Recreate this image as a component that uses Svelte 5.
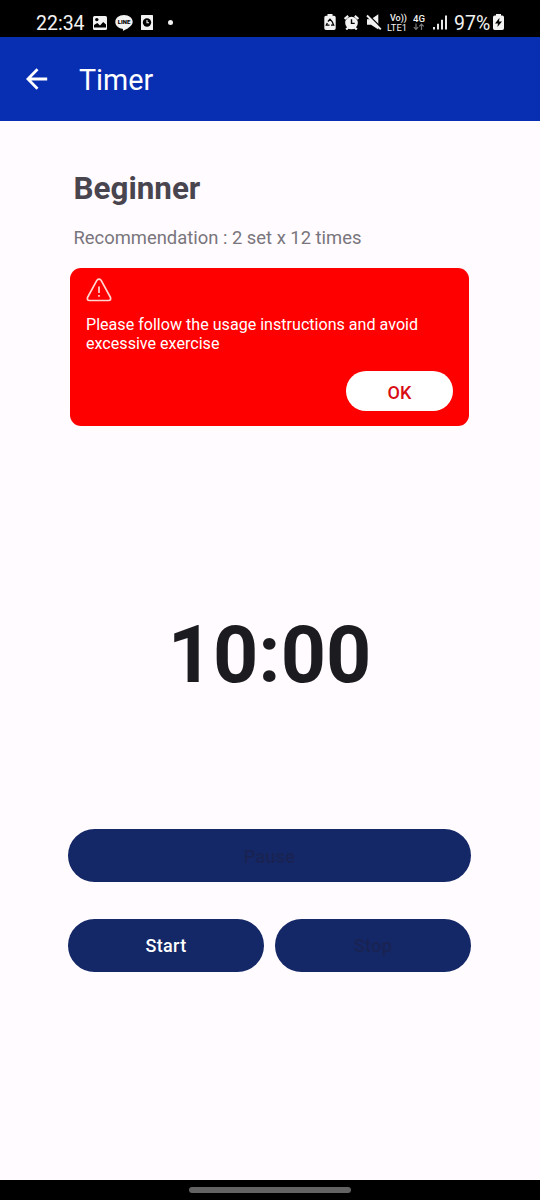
<script>
  let duration = $state(600);
  let noticeOpen = $state(true);
  const clock = $derived(
    `${String(Math.floor(duration / 60)).padStart(2, '0')}:${String(duration % 60).padStart(2, '0')}`
  );
</script>

<div class="screen">
  <div class="status">
    <span class="time">22:34</span>
    <svg class="gallery" width="14" height="14" viewBox="0 0 14 14">
      <rect width="14" height="14" rx="1.500" fill="#f2f2f2" />
      <path d="M1 11.500V9L4.300 7l2.700 2.500L10.200 6l2.800 2.500v3z" fill="#000" />
      <circle cx="3.800" cy="3.600" r="1.700" fill="#000" />
    </svg>
    <svg class="line" width="18" height="16" viewBox="0 0 18 16">
      <path d="M9 0C4 0 .3 3 .3 7c0 3.500 3 6.200 7 6.800.9.1.8.8.6 2.100 3-1.300 9.800-4.600 9.800-8.900C17.700 3 14 0 9 0z" fill="#f2f2f2" />
      <text x="9" y="9.300" text-anchor="middle" font-size="6" font-weight="900" textLength="12.500" lengthAdjust="spacingAndGlyphs">LINE</text>
    </svg>
    <svg class="clockapp" width="12" height="15" viewBox="0 0 12 15">
      <rect width="12" height="15" rx=".6" fill="#f2f2f2" />
      <circle cx="6" cy="7.500" r="4.200" fill="#000" />
      <path d="M6 5v2.800h2" fill="none" stroke="#f2f2f2" stroke-width="1.100" />
    </svg>
    <span class="dot"></span>
    <span class="spacer"></span>
    <svg class="recycle" width="12" height="16" viewBox="0 0 12 16">
      <path d="M3.500 0h5v1.800H10A1.700 1.700 0 0 1 11.700 3.500v10.800A1.700 1.700 0 0 1 10 16H2A1.700 1.700 0 0 1 .3 14.300V3.500A1.700 1.700 0 0 1 2 1.800h1.500z" fill="#f2f2f2" />
      <path d="M3.900 7.500 6 5.200l2.100 2.300 1.600 3.700H7M5.500 11.200H2.300l1-2.200" fill="none" stroke="#000" stroke-width="1.300" />
    </svg>
    <svg class="alarm" width="15" height="15" viewBox="0 0 15 15">
      <path d="M.6 4 4.200.9M14.400 4 10.800.9M2.200 14.500l2.300-2.200M12.800 14.500l-2.300-2.200" stroke="#f2f2f2" stroke-width="2.200" />
      <circle cx="7.500" cy="8" r="6.300" fill="#f2f2f2" />
      <path d="M7.500 4.300V8.400H10.700" fill="none" stroke="#000" stroke-width="1.400" />
    </svg>
    <svg class="mute" width="16" height="16" viewBox="0 0 16 16">
      <path d="M1 5.300h4L12.300.3v15.200L5 10.700H1z" fill="#f2f2f2" />
      <path d="M2.800 1.300l12 12" stroke="#000" stroke-width="1.400" />
      <path d="M1 1.500 14.800 15.300" stroke="#f2f2f2" stroke-width="1.900" />
    </svg>
    <svg class="volte" width="22" height="20" viewBox="0 0 22 20">
      <text x="3" y="7.500" font-size="8.500" font-weight="500" fill="#f2f2f2" textLength="17" lengthAdjust="spacingAndGlyphs">Vo))</text>
      <text x="0" y="18" font-size="9.500" fill="#f2f2f2" textLength="20" lengthAdjust="spacingAndGlyphs">LTE1</text>
    </svg>
    <svg class="net" width="14" height="18" viewBox="0 0 14 18">
      <text x="0" y="8" font-size="9.500" font-weight="500" fill="#f2f2f2" textLength="12" lengthAdjust="spacingAndGlyphs">4G</text>
      <path d="M3 9.500v6M.8 13.200 3 15.500l2.200-2.300M8.500 16v-6M6.300 12.300l2.200-2.300 2.200 2.300" fill="none" stroke="#777" stroke-width="1.200" />
    </svg>
    <svg class="signal" width="15" height="15" viewBox="0 0 15 15">
      <path d="M1 12v2.500M5 8.800v5.700M9 4.700v9.800M13 .5v14" stroke="#e8e8e8" stroke-width="2" />
    </svg>
    <span class="percent">97%</span>
    <svg class="battery" width="11" height="16" viewBox="0 0 11 16">
      <path d="M3 0h5v1.600h1.300A1.700 1.700 0 0 1 11 3.300v11A1.700 1.700 0 0 1 9.300 16H1.700A1.700 1.700 0 0 1 0 14.300v-11a1.700 1.700 0 0 1 1.700-1.700H3z" fill="#f2f2f2" />
      <path d="M6.500 3.800 2 9.500h3L4.400 13 9 7.600H6z" fill="#000" />
    </svg>
  </div>

  <header>
    <svg width="22" height="22" viewBox="0 0 22 22" fill="none" stroke="#fff" stroke-width="2.800">
      <path d="M21.200 11H2.500M11.500 1.300 1.900 11l9.600 9.700" />
    </svg>
    <h1>Timer</h1>
  </header>

  <main>
    <h2>Beginner</h2>
    <p class="rec">Recommendation : 2 set x 12 times</p>

    {#if noticeOpen}
      <section class="notice">
        <svg width="26" height="24" viewBox="0 0 26 24" fill="none" stroke="#ffd6d0" stroke-width="1.700" stroke-linejoin="round">
          <path d="M11 2.200Q13 0 15 2.200L24.500 19.500Q25.200 22.500 22.700 22.500H3.300Q.8 22.500 1.500 19.500Z" />
          <path d="M13 8.600v6.400M13 16.900v1.900" />
        </svg>
        <p>Please follow the usage instructions and avoid excessive exercise</p>
        <button class="ok" onclick={() => (noticeOpen = false)}>OK</button>
      </section>
    {/if}

    <div class="countdown">{clock}</div>

    <div class="controls">
      <button class="wide" disabled>Pause</button>
      <button>Start</button>
      <button disabled>Stop</button>
    </div>
  </main>

  <div class="nav"><span></span></div>
</div>

<style>
  :global(body) {
    margin: 0;
    background: #fffbff;
  }
  .screen {
    width: 540px;
    height: 1200px;
    display: flex;
    flex-direction: column;
    background: #fffbff;
    font-family: Roboto, sans-serif;
    overflow: hidden;
  }
  .status {
    height: 37px;
    flex: none;
    box-sizing: border-box;
    padding: 8px 36px 0 36px;
    background: #000;
    color: #f2f2f2;
    display: flex;
    align-items: center;
    font-size: 19.500px;
  }
  .status svg {
    flex: none;
  }
  .time {
    width: 57px;
    padding-top: 2px;
  }
  .line {
    margin-left: 8px;
  }
  .clockapp {
    margin-left: 8px;
  }
  .dot {
    width: 5px;
    height: 5px;
    border-radius: 50%;
    background: #f2f2f2;
    margin-left: 15px;
  }
  .spacer {
    flex: 1;
  }
  .alarm {
    margin-left: 8px;
  }
  .mute {
    margin-left: 7px;
  }
  .volte {
    margin-left: 5px;
  }
  .net {
    margin-left: 4px;
  }
  .signal {
    margin-left: 6px;
  }
  .percent {
    width: 38px;
    margin-left: 6px;
    margin-right: 1px;
    padding-top: 2px;
    white-space: nowrap;
  }
  .recycle,
  .alarm,
  .mute,
  .signal,
  .battery {
    margin-bottom: 1px;
  }
  header {
    height: 84px;
    flex: none;
    box-sizing: border-box;
    padding: 0 26px 0 26px;
    background: #082eb2;
    color: #fff;
    display: flex;
    align-items: center;
    gap: 31px;
  }
  header h1 {
    margin: 2px 0 0;
    font-size: 28.700px;
    font-weight: 400;
  }
  main {
    flex: 1;
    min-height: 0;
    padding: 0 69px 0 68px;
    display: flex;
    flex-direction: column;
  }
  h2 {
    margin: 50px 0 0 5.500px;
    font-size: 31.400px;
    line-height: 36px;
    font-weight: 700;
    color: #49454f;
  }
  .rec {
    margin: 19px 0 0 5.500px;
    font-size: 18.400px;
    line-height: 24px;
    color: #79757c;
    white-space: nowrap;
  }
  .notice {
    margin: 18px 2px 0;
    height: 158px;
    box-sizing: border-box;
    padding: 10px 16px 15px;
    border-radius: 11px;
    background: #f00;
    color: #fff;
    display: flex;
    flex-direction: column;
    flex: none;
  }
  .notice p {
    margin: 13px 0 0;
    font-size: 16.100px;
    line-height: 19px;
  }
  button {
    border: 0;
    padding: 0 0 1px;
    font: 500 18px Roboto, sans-serif;
    letter-spacing: 0.3px;
    background: #142766;
    color: #fff;
    border-radius: 27px;
  }
  button:disabled {
    color: #192353;
  }
  .wide {
    grid-column: 1 / -1;
    padding: 1px 0 0;
  }
  .notice .ok {
    width: 107px;
    height: 40px;
    margin: auto 0 0 auto;
    background: #fff;
    color: #d90b12;
    padding: 3px 0 0;
    letter-spacing: 0;
  }
  .countdown {
    margin-top: 182px;
    height: 94px;
    line-height: 94px;
    text-align: center;
    font-size: 79px;
    font-weight: 700;
    color: #1c1b1f;
  }
  .controls {
    margin-top: 127px;
    display: grid;
    grid-template-columns: 1fr 1fr;
    grid-auto-rows: 53px;
    gap: 37px 11px;
  }
  .nav {
    height: 20px;
    flex: none;
    background: #000;
    display: flex;
    align-items: center;
    justify-content: center;
  }
  .nav span {
    width: 162px;
    height: 6px;
    border-radius: 3px;
    background: #636363;
  }
</style>
